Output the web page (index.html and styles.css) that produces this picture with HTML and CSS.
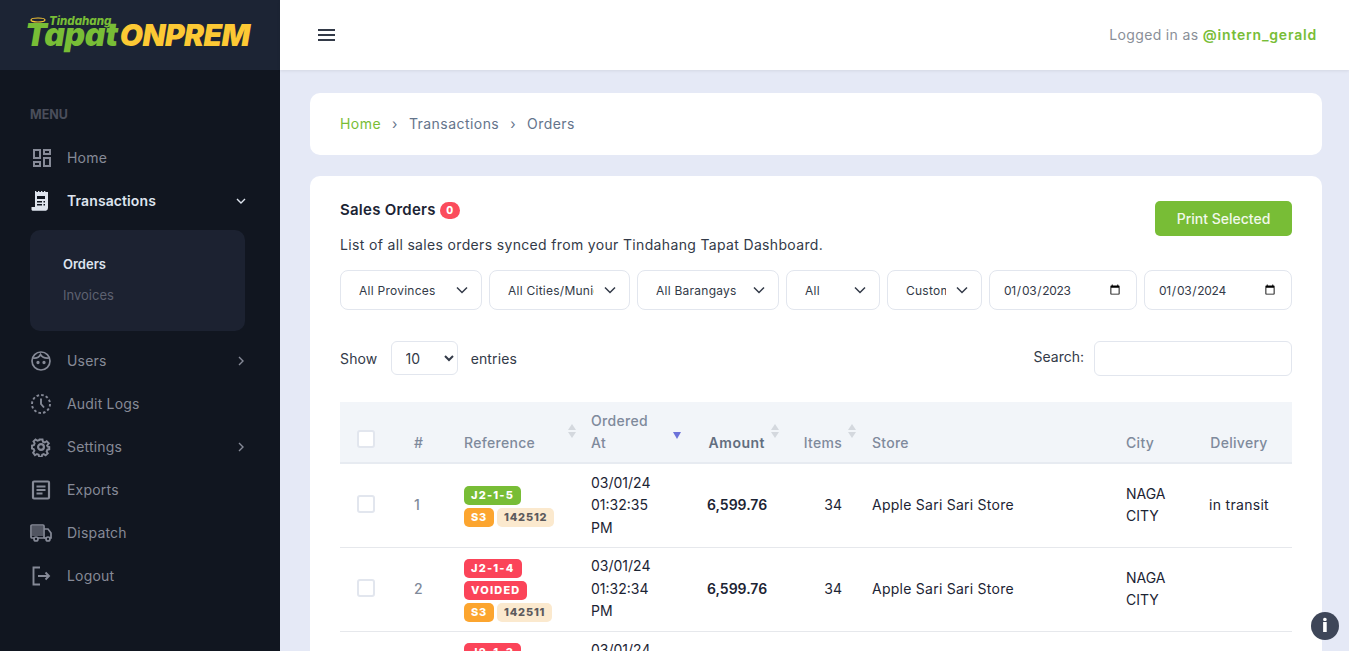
FILE: index.html
```html
<!DOCTYPE html>
<html lang="en">
<head>
<meta charset="UTF-8">
<title>Sales Orders</title>
<link rel="stylesheet" href="styles.css">
</head>
<body>

<aside class="sidebar">
  <div class="brand">
    <div class="logo">
      <svg class="halo" width="16" height="6" viewBox="0 0 16 6"><ellipse cx="8" cy="3" rx="7" ry="2" fill="none" stroke="#fcc934" stroke-width="1.2"/></svg>
      <span class="logo-small">Tindahang</span>
      <span class="logo-tapat">Tapat</span>
      <span class="logo-onprem">ONPREM</span>
    </div>
  </div>

  <nav class="menu">
    <h3 class="menu-title">MENU</h3>
    <a class="menu-item">
      <svg class="icon" viewBox="0 0 20 20" fill="none" stroke="currentColor" stroke-width="2"><rect x="3" y="2" width="6" height="8"/><rect x="13" y="2" width="6" height="4"/><rect x="3" y="14" width="6" height="4"/><rect x="13" y="10" width="6" height="8"/></svg>
      Home
    </a>
    <a class="menu-item active">
      <svg class="icon" viewBox="0 0 20 20"><path d="M4 0h1.300v1H7V0h1.300v1H10V0h1.300v1H13V0h1.300v1H17v16a3 3 0 0 1-2 2.800H1.500A1.500 1.500 0 0 1 .5 18.500V16H4z" fill="#dee4ee"/><path d="M6 5h8v3H6zM6 10h5v1.500H6zM6 13h5v1.500H6zM12.500 10H14v1.500h-1.500zM12.500 13H14v1.500h-1.500z" fill="#111620"/></svg>
      Transactions
      <svg class="caret" viewBox="0 0 12 12" fill="none" stroke="currentColor" stroke-width="1.400"><path d="M2 4l4 4 4-4"/></svg>
    </a>
    <div class="submenu">
      <a class="sub-item current">Orders</a>
      <a class="sub-item">Invoices</a>
    </div>
    <a class="menu-item">
      <svg class="icon" viewBox="0 0 20 20" fill="none" stroke="currentColor" stroke-width="1.700"><circle cx="10" cy="10" r="9"/><path d="M2 7c3 .5 6-.500 7.500-3.500C11 6 14 7.500 18 7"/><circle cx="7" cy="11.500" r=".8" fill="currentColor"/><circle cx="13" cy="11.500" r=".8" fill="currentColor"/></svg>
      Users
      <svg class="caret" viewBox="0 0 12 12" fill="none" stroke="currentColor" stroke-width="1.400"><path d="M4 2l4 4-4 4"/></svg>
    </a>
    <a class="menu-item">
      <svg class="icon" viewBox="0 0 20 20" fill="none" stroke="currentColor" stroke-width="1.900"><circle cx="10" cy="10" r="9" stroke-dasharray="2.600 2.100"/><path d="M10 4.500V10l3 3.500"/></svg>
      Audit Logs
    </a>
    <a class="menu-item">
      <svg class="icon" viewBox="0 0 24 24" fill="none" stroke="currentColor" stroke-width="2.600"><circle cx="12" cy="12" r="3.500"/><path d="M10 2h4l.6 3 2.400 1 2.600-1.700 2.800 2.800L20.200 10l.8 1.500 2 .5v3l-2.500.6-1 2.400 1.500 2.500-2.800 2.500-2.500-1.500-2.100.9-.6 2.500h-3.500l-.6-2.500-2.400-1-2.500 1.600L1.500 19.500 3.200 17l-1-2.400L0 14v-4l2.500-.5 1-2.400L2 4.600 4.700 2 7.200 3.700 9.500 2.800z" transform="translate(1.200 1.200) scale(.9)"/></svg>
      Settings
      <svg class="caret" viewBox="0 0 12 12" fill="none" stroke="currentColor" stroke-width="1.400"><path d="M4 2l4 4-4 4"/></svg>
    </a>
    <a class="menu-item">
      <svg class="icon" viewBox="0 0 20 20" fill="none" stroke="currentColor" stroke-width="2.200"><rect x="2" y="1.500" width="16" height="17" rx="1"/><path d="M5.500 6.500h9M5.500 10h9M5.500 13.500h6"/></svg>
      Exports
    </a>
    <a class="menu-item">
      <svg class="icon truck" viewBox="0 0 22 18" fill="none" stroke="currentColor" stroke-width="1.700"><path d="M4 14H1.800A1 1 0 0 1 1 13V2a1 1 0 0 1 1-1h11a1 1 0 0 1 1 1v12H8"/><path d="M14 5h4l3 4v5h-1.500M14 14h2"/><rect x="2" y="2" width="11" height="10" fill="currentColor" stroke="none" opacity=".55"/><circle cx="6" cy="15" r="2"/><circle cx="18" cy="15" r="2"/></svg>
      Dispatch
    </a>
    <a class="menu-item">
      <svg class="icon" viewBox="0 0 20 20" fill="none" stroke="currentColor" stroke-width="1.900"><path d="M9 1.500H2.500v17H9"/><path d="M7 10h11M14.500 6.500L18 10l-3.500 3.500"/></svg>
      Logout
    </a>
  </nav>
</aside>

<div class="main">
  <header class="topbar">
    <button class="burger" aria-label="Menu"><span></span><span></span><span></span></button>
    <p class="logged">Logged in as <b>@intern_gerald</b></p>
  </header>

  <main class="content">
    <div class="card crumbs">
      <a class="crumb-home">Home</a><span class="sep">›</span><a>Transactions</a><span class="sep">›</span><a>Orders</a>
    </div>

    <section class="card orders">
      <div class="orders-head">
        <div>
          <h2>Sales Orders <span class="count">0</span></h2>
          <p class="lead">List of all sales orders synced from your Tindahang Tapat Dashboard.</p>
        </div>
        <button class="btn-print">Print Selected</button>
      </div>

      <div class="filters">
        <select class="f-wide"><option>All Provinces</option></select>
        <select class="f-wide f-city"><option>All Cities/Municipalities</option></select>
        <select class="f-wide"><option>All Barangays</option></select>
        <select class="f-small"><option>All</option></select>
        <select class="f-small f-range"><option>Custom</option></select>
        <input class="f-date" type="date" value="2023-01-03">
        <input class="f-date" type="date" value="2024-01-03">
      </div>

      <div class="table-tools">
        <label class="show">Show
          <select><option>10</option></select>
          entries</label>
        <label class="search">Search: <input type="text"></label>
      </div>

      <table class="orders-table">
        <colgroup>
          <col class="c-check"><col class="c-num"><col class="c-ref"><col class="c-date"><col class="c-amt"><col class="c-items"><col class="c-store"><col class="c-city"><col class="c-del">
        </colgroup>
        <thead>
          <tr>
            <th><span class="check"></span></th>
            <th>#</th>
            <th>Reference<i class="arrows a-ref"></i></th>
            <th>Ordered<br>At<i class="arrow-down"></i></th>
            <th class="right strong">Amount<i class="arrows"></i></th>
            <th class="right">Items<i class="arrows"></i></th>
            <th class="store">Store</th>
            <th>City</th>
            <th class="center">Delivery</th>
          </tr>
        </thead>
        <tbody>
          <tr>
            <td><span class="check"></span></td>
            <td class="num">1</td>
            <td>
              <div class="tags"><span class="tag green">J2-1-5</span></div>
              <div class="tags"><span class="tag orange">S3</span><span class="tag cream">142512</span></div>
            </td>
            <td>03/01/24 01:32:35 PM</td>
            <td class="right amount">6,599.76</td>
            <td class="right">34</td>
            <td class="store">Apple Sari Sari Store</td>
            <td>NAGA CITY</td>
            <td class="center">in transit</td>
          </tr>
          <tr>
            <td><span class="check"></span></td>
            <td class="num">2</td>
            <td>
              <div class="tags"><span class="tag red">J2-1-4</span></div>
              <div class="tags"><span class="tag red">VOIDED</span></div>
              <div class="tags"><span class="tag orange">S3</span><span class="tag cream">142511</span></div>
            </td>
            <td>03/01/24 01:32:34 PM</td>
            <td class="right amount">6,599.76</td>
            <td class="right">34</td>
            <td class="store">Apple Sari Sari Store</td>
            <td>NAGA CITY</td>
            <td class="center"></td>
          </tr>
          <tr>
            <td><span class="check"></span></td>
            <td class="num">3</td>
            <td>
              <div class="tags"><span class="tag red">J2-1-3</span></div>
              <div class="tags"><span class="tag red">VOIDED</span></div>
              <div class="tags"><span class="tag orange">S3</span><span class="tag cream">142510</span></div>
            </td>
            <td>03/01/24 01:32:33 PM</td>
            <td class="right amount">6,599.76</td>
            <td class="right">34</td>
            <td class="store">Apple Sari Sari Store</td>
            <td>NAGA CITY</td>
            <td class="center"></td>
          </tr>
        </tbody>
      </table>
    </section>
  </main>
</div>

<button class="info" aria-label="Info">i</button>

</body>
</html>
```

FILE: styles.css
```css
* {
  box-sizing: border-box;
}
html, body {
  height: 100%;
  margin: 0;
  overflow: hidden;
}
body {
  display: flex;
  font-family: Inter, "Liberation Sans", sans-serif;
  font-size: 14px;
  color: #1c2434;
  background: #e5e9f6;
}
a {
  text-decoration: none;
}

/* sidebar */
.sidebar {
  width: 280px;
  flex: none;
  background: #111620;
  color: #868a97;
}
.brand {
  height: 70px;
  background: #1c2434;
  padding: 15px 0 0 25px;
}
.logo {
  position: relative;
  display: flex;
  align-items: baseline;
  font-style: italic;
  font-weight: 900;
  white-space: nowrap;
}
.halo {
  position: absolute;
  left: 5px;
  top: 2px;
}
.logo-small {
  position: absolute;
  left: 24px;
  top: 0;
  font-size: 11.500px;
  line-height: 13px;
  font-weight: 800;
  color: #78bd36;
}
.logo-tapat {
  font-size: 32px;
  letter-spacing: -.3px;
  color: #78bd36;
}
.logo-onprem {
  font-size: 30px;
  letter-spacing: -.6px;
  margin-left: 2px;
  color: #fcc934;
}
.menu {
  padding: 38px 0 0 30px;
}
.menu-title {
  margin: 0 0 14px;
  font-size: 12.500px;
  line-height: 14px;
  font-weight: 700;
  color: #4a4e5b;
}
.menu-item {
  display: flex;
  align-items: center;
  gap: 15px;
  height: 43px;
  width: 217px;
  font-size: 14px;
  letter-spacing: .2px;
}
.menu-item.active {
  color: #dee4ee;
  font-weight: 600;
  letter-spacing: .1px;
}
.icon {
  width: 22px;
  height: 20px;
  flex: none;
  padding: 0 1px;
}
.truck {
  padding: 0;
}
.caret {
  width: 12px;
  height: 12px;
  margin-left: auto;
}
.submenu {
  width: 215px;
  height: 101px;
  margin: 8px 0;
  padding: 19px 33px;
  background: #1c2231;
  border-radius: 10px;
  font-size: 13px;
  line-height: 31px;
}
.sub-item {
  display: block;
  color: #5d6170;
}
.sub-item.current {
  color: #dee4ee;
  font-weight: 600;
}

/* top */
.main {
  flex: 1;
  min-width: 0;
}
.topbar {
  display: flex;
  align-items: center;
  justify-content: space-between;
  height: 70px;
  padding: 0 32px 1px 38px;
  background: #fff;
  box-shadow: 0 1px 3px rgba(0,0,0,.08);
}
.burger {
  display: flex;
  flex-direction: column;
  gap: 3px;
  padding: 0;
  border: 0;
  background: none;
}
.burger span {
  width: 17px;
  height: 2px;
  background: #333a48;
}
.logged {
  margin: 0;
  letter-spacing: .35px;
  color: #8a8f98;
}
.logged b {
  font-weight: 600;
  letter-spacing: .8px;
  color: #78bd36;
}

/* content */
.content {
  padding: 23px 27px 0 30px;
}
.card {
  background: #fff;
  border-radius: 10px;
}
.crumbs {
  display: flex;
  align-items: center;
  height: 62px;
  padding: 0 30px 1px;
  letter-spacing: .45px;
  color: #64748b;
}
.crumb-home {
  color: #78bd36;
}
.sep {
  margin: 0 11px;
  color: #64748b;
}
.orders {
  margin-top: 21px;
  padding: 24px 30px 0;
}
.orders-head {
  display: flex;
  justify-content: space-between;
  align-items: flex-start;
}
.orders h2 {
  display: flex;
  align-items: center;
  gap: 4px;
  margin: 0;
  font-size: 15px;
  line-height: 20px;
  letter-spacing: .25px;
  font-weight: 600;
}
.count {
  display: inline-block;
  min-width: 20px;
  height: 17px;
  border-radius: 9px;
  background: #fb4c5c;
  color: #fff;
  font-size: 10px;
  font-weight: 800;
  line-height: 17px;
  text-align: center;
}
.lead {
  margin: 15px 0 0;
  line-height: 20px;
  letter-spacing: .34px;
  color: #333a48;
}
.btn-print {
  width: 137px;
  height: 35px;
  margin-top: 1px;
  padding-bottom: 2px;
  border: 0;
  border-radius: 5px;
  background: #78bd36;
  color: #f1f8ea;
  font: 500 14px Inter, sans-serif;
}
.filters {
  display: flex;
  gap: 7px;
  margin-top: 15px;
}
.filters select, .filters input {
  height: 40px;
  min-width: 0;
  border: 1px solid #e2e6ee;
  border-radius: 8px;
  background-color: #fff;
  color: #333a48;
  font: 12px Inter, sans-serif;
}
.filters select {
  appearance: none;
  padding: 0 35px 0 18px;
  letter-spacing: .25px;
  background-image: url("data:image/svg+xml,%3Csvg xmlns='http://www.w3.org/2000/svg' width='12' height='8' viewBox='0 0 12 8'%3E%3Cpath d='M1 1.500l5 5 5-5' fill='none' stroke='%23333a48' stroke-width='1.500'/%3E%3C/svg%3E");
  background-repeat: no-repeat;
  background-position: right 13px center;
}
.f-wide {
  width: 142px;
}
.filters .f-city {
  width: 141px;
}
.f-small {
  width: 94px;
}
.filters .f-range {
  width: 95px;
}
.filters .f-date {
  width: 148px;
  padding: 0 13px;
  letter-spacing: -.3px;
}
.table-tools {
  display: flex;
  justify-content: space-between;
  align-items: center;
  height: 36px;
  margin-top: 30px;
  color: #333a48;
}
.show {
  letter-spacing: .15px;
}
.show select {
  width: 67px;
  height: 34px;
  margin: 0 9px;
  padding: 0 10px;
  border: 1px solid #e2e6ee;
  border-radius: 6px;
  background: #fff;
  color: #333a48;
  font: 14px Inter, sans-serif;
}
.search input {
  width: 198px;
  height: 35px;
  margin-left: 6px;
  border: 1px solid #e2e6ee;
  border-radius: 6px;
  vertical-align: middle;
}

/* table */
.orders-table {
  width: 952px;
  margin-top: 26px;
  table-layout: fixed;
  border-collapse: collapse;
}
.c-check { width: 57px; }
.c-num { width: 50px; }
.c-ref { width: 127px; }
.c-date { width: 116px; }
.c-amt { width: 92px; }
.c-items { width: 77px; }
.c-store { width: 250px; }
.c-city { width: 82px; }
.c-del { width: 101px; }
th, td {
  padding: 6px 17px;
  text-align: left;
  font-weight: 400;
}
thead tr {
  height: 61px;
  background: #f2f5f9;
  border-bottom: 2px solid #e7ebf1;
}
th {
  position: relative;
  vertical-align: bottom;
  padding-bottom: 8px;
  line-height: 22px;
  letter-spacing: .3px;
  font-weight: 500;
  color: #7f8a9c;
}
th.strong {
  color: #636e7f;
  font-weight: 600;
  letter-spacing: .5px;
}
tbody tr {
  height: 84px;
  border-bottom: 1px solid #e6e8ec;
}
td {
  line-height: 22.500px;
  color: #1c2434;
}
th.store, td.store {
  padding-left: 13px;
  letter-spacing: .25px;
}
.center {
  text-align: center;
}
th.center, td.center {
  padding-left: 0;
  padding-right: 5px;
  letter-spacing: .3px;
}
.right {
  text-align: right;
}
.num {
  font-weight: 500;
  color: #808a9a;
}
.amount {
  font-weight: 600;
}
.check {
  display: block;
  width: 18px;
  height: 18px;
  margin-bottom: 3px;
  border: 2px solid #e2e6ee;
  border-radius: 3px;
  background: #fff;
}
th .check {
  margin-bottom: 6px;
}
.arrows, .arrow-down {
  position: absolute;
  right: 3px;
  top: 22px;
}
.a-ref {
  right: -2px;
}
.arrows::before, .arrows::after {
  content: "";
  display: block;
  margin-bottom: 2px;
  border: 4px solid transparent;
  border-top: 0;
  border-bottom: 6px solid #d4d8de;
}
.arrows::after {
  border-top: 6px solid #d4d8de;
  border-bottom: 0;
}
.arrow-down {
  top: 30px;
  right: 9px;
  border: 4.500px solid transparent;
  border-top: 7px solid #6c72d9;
  border-bottom: 0;
}
.tags {
  display: flex;
  gap: 3px;
  margin: 3px 0;
}
.tags:first-child {
  margin-top: 5px;
}
.tag {
  height: 19px;
  padding: 0 7px;
  border-radius: 5px;
  font-size: 11px;
  font-weight: 800;
  letter-spacing: .8px;
  line-height: 19px;
  color: #fff;
}
.green { background: #78bd36; letter-spacing: 1.200px; }
.red { background: #fb4459; letter-spacing: 1.200px; }
.orange { background: #fca52f; }
.cream {
  background: #fbe9ce;
  color: #5c5a5c;
}
.info {
  position: fixed;
  right: 10px;
  bottom: 11px;
  width: 28px;
  height: 28px;
  padding: 0;
  border: 0;
  border-radius: 50%;
  background: #3e4658;
  color: #fff;
  font: 900 18px/28px Inter, sans-serif;
}
```
